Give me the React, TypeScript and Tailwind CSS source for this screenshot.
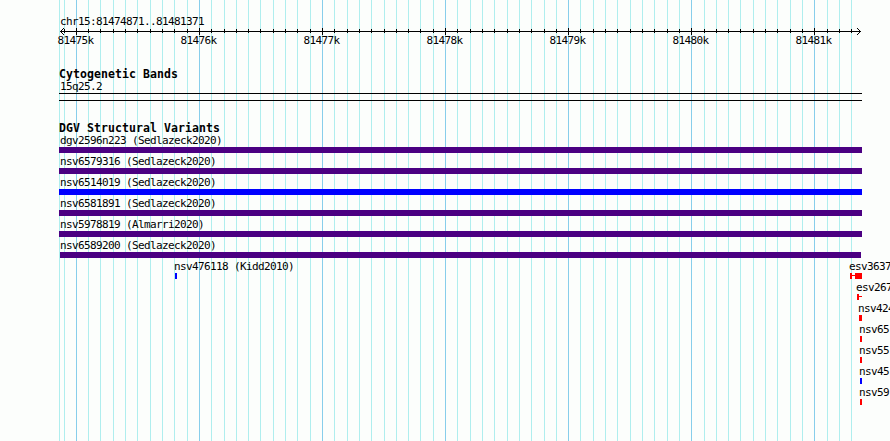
import React from 'react';

const START = 81474871;
const PX_PER_BASE = 800 / 6500;
const toX = (base: number) => Math.round(60 + (base - START) * PX_PER_BASE);

const minorBases: number[] = [];
const majorBases: number[] = [];
for (let b = 81474900; b <= 81481300; b += 100) {
  (b % 1000 === 0 ? majorBases : minorBases).push(b);
}

const LABEL =
  "whitespace-pre font-['DejaVu_Sans_Mono','Liberation_Mono',monospace] text-[11px] leading-[13px] tracking-[-0.622px] text-black";
const HEADING =
  "whitespace-pre font-['DejaVu_Sans_Mono','Liberation_Mono',monospace] text-[11.5px] font-bold leading-[15px] tracking-[0.077px] text-black";

function GridLines() {
  return (
    <svg className="absolute inset-0" width="890" height="441" shapeRendering="crispEdges">
      <rect x="59" y="0" width="1" height="441" fill="#afeeee" />
      {minorBases.map((b) => (
        <rect key={b} x={toX(b)} y="0" width="1" height="441" fill="#afeeee" />
      ))}
      {majorBases.map((b) => (
        <rect key={b} x={toX(b)} y="0" width="1" height="441" fill="#87ceeb" />
      ))}
    </svg>
  );
}

function Axis() {
  return (
    <svg className="block" width="890" height="7" shapeRendering="crispEdges">
      <rect x="60" y="3" width="801" height="1" />
      {[1, 2, 3].map((i) => (
        <g key={i}>
          <rect x={60 + i} y={3 - i} width="1" height="1" />
          <rect x={60 + i} y={3 + i} width="1" height="1" />
          <rect x={860 - i} y={3 - i} width="1" height="1" />
          <rect x={860 - i} y={3 + i} width="1" height="1" />
        </g>
      ))}
      {minorBases.map((b) => (
        <rect key={b} x={toX(b)} y="1" width="1" height="4" />
      ))}
      {majorBases.map((b) => (
        <rect key={b} x={toX(b)} y="0" width="1" height="7" />
      ))}
    </svg>
  );
}

type Variant = { name: string; labelX: number; barX: number; barW: number; color: string };

const PURPLE = '#4b0082';
const BLUE = '#0000ff';
const RED = '#ff0000';

const variants: Variant[] = [
  { name: 'dgv2596n223 (Sedlazeck2020)', labelX: 60, barX: 59, barW: 803, color: PURPLE },
  { name: 'nsv6579316 (Sedlazeck2020)', labelX: 60, barX: 59, barW: 803, color: PURPLE },
  { name: 'nsv6514019 (Sedlazeck2020)', labelX: 60, barX: 59, barW: 803, color: BLUE },
  { name: 'nsv6581891 (Sedlazeck2020)', labelX: 60, barX: 59, barW: 803, color: PURPLE },
  { name: 'nsv5978819 (Almarri2020)', labelX: 60, barX: 59, barW: 803, color: PURPLE },
  { name: 'nsv6589200 (Sedlazeck2020)', labelX: 60, barX: 60, barW: 801, color: PURPLE },
];

const shortVariants: Variant[] = [
  { name: 'nsv424', labelX: 858, barX: 859, barW: 3, color: RED },
  { name: 'nsv65', labelX: 859, barX: 860, barW: 2, color: RED },
  { name: 'nsv55', labelX: 859, barX: 860, barW: 2, color: RED },
  { name: 'nsv45', labelX: 859, barX: 860, barW: 2, color: BLUE },
  { name: 'nsv59', labelX: 859, barX: 860, barW: 2, color: RED },
];

function VariantRow({ v }: { v: Variant }) {
  return (
    <div className="h-[21px]">
      <div className={LABEL} style={{ marginLeft: v.labelX }}>{v.name}</div>
      <div className="h-1.5" style={{ marginLeft: v.barX, width: v.barW, backgroundColor: v.color }} />
    </div>
  );
}

export default function App() {
  return (
    <div className="relative h-[441px] w-[890px] overflow-hidden bg-[#fcfefc]">
      <GridLines />
      <div className="relative flex flex-col">
        <div className={`${LABEL} mt-[15px] ml-[60px]`}>chr15:81474871..81481371</div>
        <Axis />
        <div className="ml-[14px] -mt-px flex">
          {majorBases.map((b) => (
            <div key={b} className={`${LABEL} w-[123px] shrink-0 text-center`}>{`${b / 1000}k`}</div>
          ))}
        </div>

        <section className="mt-5">
          <h2 className={`${HEADING} ml-[59px] h-[13px]`}>Cytogenetic Bands</h2>
          <div className={`${LABEL} ml-[60px]`}>15q25.2</div>
          <div className="ml-[59px] h-2 w-[803px] border-y border-black" />
        </section>

        <section className="mt-5">
          <h2 className={`${HEADING} ml-[59px] h-[13px]`}>DGV Structural Variants</h2>
          {variants.map((v) => (
            <VariantRow key={v.name} v={v} />
          ))}
          <div className="h-[21px]">
            <div className="flex">
              <div className={`${LABEL} ml-[174px] w-[675px] shrink-0`}>nsv476118 (Kidd2010)</div>
              <div className={LABEL}>esv3637</div>
            </div>
            <div className="flex h-1.5">
              <div className="ml-[175px] w-0.5 bg-[#0000ff]" />
              <div className="ml-[673px] w-0.5 bg-[#ff0000]" />
              <div className="mt-0.5 h-px w-[3px] bg-[#ff0000]" />
              <div className="w-[7px] bg-[#ff0000]" />
            </div>
          </div>
          <div className="h-[21px]">
            <div className={`${LABEL} ml-[856px]`}>esv267</div>
            <div className="flex h-1.5">
              <div className="ml-[857px] w-0.5 bg-[#ff0000]" />
              <div className="mt-0.5 h-px w-[3px] bg-[#ff0000]" />
            </div>
          </div>
          {shortVariants.map((v) => (
            <VariantRow key={v.name} v={v} />
          ))}
        </section>
      </div>
    </div>
  );
}
